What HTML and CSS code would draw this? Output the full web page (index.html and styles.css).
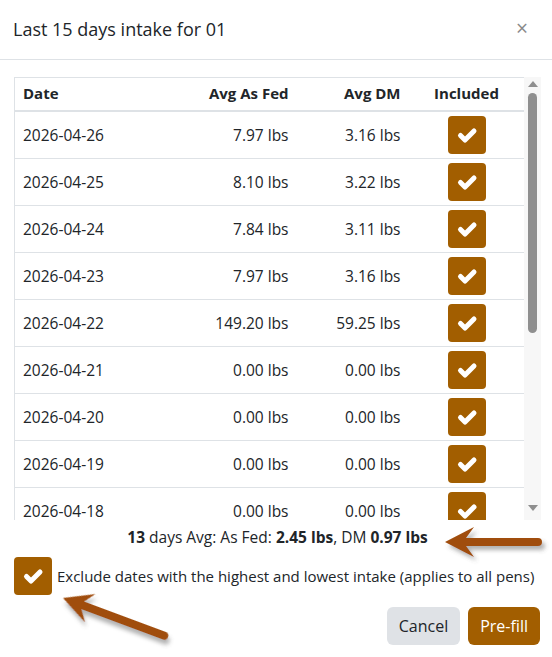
FILE: index.html
```
<!DOCTYPE html>
<html lang="en">

<head>
  <meta charset="UTF-8">
  <meta name="viewport" content="width=device-width, initial-scale=1.0">
  <title>Last 15 days intake</title>
  <link rel="stylesheet" href="styles.css">
</head>

<body>
  <div class="modal">
    <div class="modal-header">
      <h5 class="modal-title">Last 15 days intake for 01</h5>
      <button class="close" type="button">&times;</button>
    </div>

    <div class="modal-body">
      <div class="scroll-box">
        <div class="table-wrap">
          <table class="intake-table">
            <colgroup>
              <col class="col-date">
              <col class="col-fed">
              <col class="col-dm">
              <col class="col-inc">
            </colgroup>
            <thead>
              <tr>
                <th class="left">Date</th>
                <th class="right">Avg As Fed</th>
                <th class="right">Avg DM</th>
                <th class="center">Included</th>
              </tr>
            </thead>
            <tbody id="rows"></tbody>
          </table>
        </div>
        <div class="fake-scrollbar">
          <span class="sb-arrow sb-up"></span>
          <div class="sb-thumb"></div>
          <span class="sb-arrow sb-down"></span>
        </div>
      </div>

      <p class="summary"><b>13</b> days Avg: As Fed: <b>2.45 lbs</b>, DM <b>0.97 lbs</b></p>

      <div class="exclude">
        <span class="check-box">
          <svg viewBox="0 0 38 38" width="38" height="38"><polyline points="12.5,19.5 17,24 26,15" /></svg>
        </span>
        <span class="exclude-text">Exclude dates with the highest and lowest intake (applies to all pens)</span>
      </div>
    </div>

    <div class="modal-footer">
      <button class="btn btn-cancel" type="button">Cancel</button>
      <button class="btn btn-prefill" type="button">Pre-fill</button>
    </div>

    <!-- annotation arrows drawn over the dialog -->
    <svg class="annotations" width="552" height="657" viewBox="0 0 552 657">
      <defs>
        <filter id="shadow" x="-20%" y="-50%" width="140%" height="200%">
          <feDropShadow dx="3" dy="4" stdDeviation="2" flood-color="#555" flood-opacity="0.45" />
        </filter>
      </defs>
      <path class="arrow" transform="translate(445 542)"
        d="M0,0 L29,-15 L21,-4 L93,-4 A4,4 0 0 1 93,4 L21,4 L29,15 Z" />
      <path class="arrow" transform="translate(63 598) rotate(20.4)"
        d="M0,0 L29,-15 L21,-4 L108,-4 A4,4 0 0 1 108,4 L21,4 L29,15 Z" />
    </svg>
  </div>

  <script>
    var data = [
      ["2026-04-26", "7.97 lbs", "3.16 lbs"],
      ["2026-04-25", "8.10 lbs", "3.22 lbs"],
      ["2026-04-24", "7.84 lbs", "3.11 lbs"],
      ["2026-04-23", "7.97 lbs", "3.16 lbs"],
      ["2026-04-22", "149.20 lbs", "59.25 lbs"],
      ["2026-04-21", "0.00 lbs", "0.00 lbs"],
      ["2026-04-20", "0.00 lbs", "0.00 lbs"],
      ["2026-04-19", "0.00 lbs", "0.00 lbs"],
      ["2026-04-18", "0.00 lbs", "0.00 lbs"]
    ];
    var check = '<span class="check-box"><svg viewBox="0 0 38 38" width="38" height="38"><polyline points="12.5,19.5 17,24 26,15" /></svg></span>';
    var html = "";
    data.forEach(function (r) {
      html += '<tr><td class="left">' + r[0] + '</td><td class="right">' + r[1] +
        '</td><td class="right">' + r[2] + '</td><td class="center">' + check + '</td></tr>';
    });
    document.getElementById("rows").innerHTML = html;
  </script>
</body>

</html>
```

FILE: styles.css
```
* {
  margin: 0;
  padding: 0;
  box-sizing: border-box;
}

body {
  font-family: "Open Sans", "Noto Sans", sans-serif;
  color: #212529;
  background: #fff;
  width: 552px;
  height: 657px;
  overflow: hidden;
}

.modal {
  position: relative;
  width: 552px;
  height: 657px;
}

.modal-header {
  height: 60px;
  display: flex;
  align-items: center;
  justify-content: space-between;
  padding: 0 24px 0 13px;
  border-bottom: 1px solid #dee2e6;
}

.modal-title {
  font-size: 18px;
  font-weight: 400;
  line-height: 1.5;
}

.close {
  border: none;
  background: none;
  font-family: "Open Sans", sans-serif;
  font-size: 21px;
  color: #8a8a8a;
  line-height: 1;
  margin-top: -3px;
}

.modal-body {
  padding: 17px 11px 0 14px;
}

.scroll-box {
  display: flex;
  height: 443px;
}

.table-wrap {
  width: 510px;
  overflow: hidden;
}

.intake-table {
  width: 510px;
  table-layout: fixed;
  border-collapse: collapse;
  font-size: 15.5px;
}

.col-date { width: 166px; }
.col-fed { width: 116px; }
.col-dm { width: 112px; }
.col-inc { width: 116px; }

.intake-table th,
.intake-table td {
  border: 1px solid #dee2e6;
  border-left: none;
  border-right: none;
  padding: 4px 8px;
  vertical-align: middle;
  white-space: nowrap;
}

.intake-table tr > :first-child {
  border-left: 1px solid #dee2e6;
}

.intake-table th {
  height: 33px;
  padding-top: 2px;
  padding-bottom: 4px;
  font-weight: 700;
  font-size: 15px;
  border-bottom: 2px solid #dee2e6;
}

.intake-table td {
  height: 47px;
}

.left { text-align: left; }
.right { text-align: right; }
.center { text-align: center; }

.check-box {
  display: inline-flex;
  flex: none;
  width: 38px;
  height: 38px;
  border-radius: 4px;
  background: #a25e00;
  vertical-align: middle;
}

.check-box polyline {
  fill: none;
  stroke: #fff;
  stroke-width: 5;
  stroke-linecap: round;
  stroke-linejoin: round;
}

.intake-table .check-box {
  margin-left: 1px;
}

/* drawn scrollbar, same look as the classic chrome one */
.fake-scrollbar {
  width: 17px;
  background: #f7f7f7;
  display: flex;
  flex-direction: column;
  align-items: center;
}

.sb-arrow {
  width: 0;
  height: 0;
  border-left: 5px solid transparent;
  border-right: 5px solid transparent;
}

.sb-up {
  margin-top: 4px;
  border-bottom: 6px solid #8f8f8f;
}

.sb-thumb {
  width: 9px;
  height: 240px;
  margin-top: 6px;
  border-radius: 5px;
  background: #8f8f8f;
}

.sb-down {
  margin-top: auto;
  margin-bottom: 9px;
  border-top: 6px solid #8f8f8f;
}

.summary {
  margin-top: 6px;
  text-align: center;
  font-size: 15.5px;
  line-height: 22px;
}

.exclude {
  display: flex;
  align-items: center;
  gap: 5px;
  margin-top: 9px;
  height: 38px;
}

.exclude-text {
  font-size: 15px;
  line-height: 22px;
  white-space: nowrap;
}

.modal-footer {
  display: flex;
  justify-content: flex-end;
  gap: 8px;
  padding: 12px 12px 0 0;
}

.btn {
  height: 38px;
  padding: 0 12px;
  border: none;
  border-radius: 6px;
  font-family: "Open Sans", sans-serif;
  font-size: 16px;
}

.btn-cancel {
  background: #dfe2e6;
  color: #212529;
}

.btn-prefill {
  background: #a25e00;
  color: #fff;
}

.annotations {
  position: absolute;
  top: 0;
  left: 0;
  pointer-events: none;
}

.arrow {
  fill: #a04d0d;
  filter: url(#shadow);
}
```
